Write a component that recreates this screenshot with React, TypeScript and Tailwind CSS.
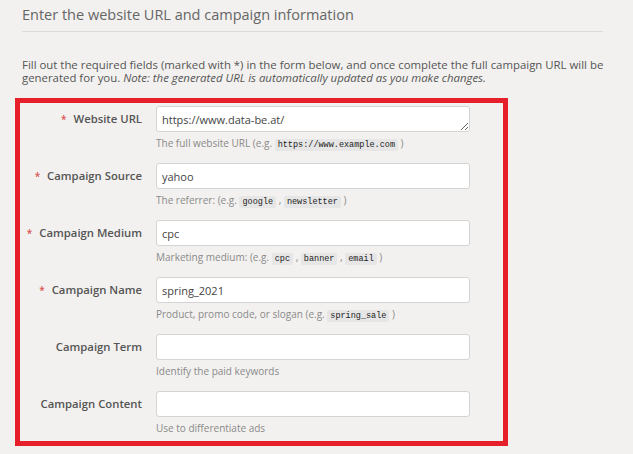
const Code = ({ children }: { children: string }) => (
  <code className="bg-[#e6e6e6] text-[#222] px-[3px] py-[1px] rounded-[2px] text-[8.5px] font-['Liberation_Mono',monospace]">
    {children}
  </code>
)

type Field = {
  label: string
  required?: boolean
  value: string
  help: React.ReactNode
  area?: boolean
}

const fields: Field[] = [
  {
    label: "Website URL",
    required: true,
    value: "https://www.data-be.at/",
    area: true,
    help: (
      <>
        The full website URL (e.g. <Code>https://www.example.com</Code> )
      </>
    ),
  },
  {
    label: "Campaign Source",
    required: true,
    value: "yahoo",
    help: (
      <>
        The referrer: (e.g. <Code>google</Code> , <Code>newsletter</Code> )
      </>
    ),
  },
  {
    label: "Campaign Medium",
    required: true,
    value: "cpc",
    help: (
      <>
        Marketing medium: (e.g. <Code>cpc</Code> , <Code>banner</Code> , <Code>email</Code> )
      </>
    ),
  },
  {
    label: "Campaign Name",
    required: true,
    value: "spring_2021",
    help: (
      <>
        Product, promo code, or slogan (e.g. <Code>spring_sale</Code> )
      </>
    ),
  },
  { label: "Campaign Term", value: "", help: "Identify the paid keywords" },
  { label: "Campaign Content", value: "", help: "Use to differentiate ads" },
]

const App = () => {
  return (
    <div className="min-h-screen bg-[#f2f1ef] font-['Open_Sans',sans-serif] pt-[4px]">
      <div className="pl-[22px] pr-[18px]">
        <h2 className="text-[14.5px] text-[#666] leading-[22px] pb-[5px] mr-[12px] border-b border-[#dcdcdc]">
          Enter the website URL and campaign information
        </h2>
        <p className="text-[11.4px] text-[#555] leading-[13px] mt-[26px]">
          Fill out the required fields (marked with *) in the form below, and once complete the full campaign URL will be
          generated for you. <em>Note: the generated URL is automatically updated as you make changes.</em>
        </p>
      </div>
      <form className="ml-[15px] mt-[14px] w-[493px] border-[5px] border-[#e5202b] pt-[3px] pb-[6px] flex flex-col gap-[13px]">
        {fields.map((f) => (
          <div key={f.label} className="flex">
            <label className="w-[122px] h-[26px] flex items-center justify-end gap-[7px] text-[11.3px] font-semibold text-[#555]">
              {f.required && <span className="text-[#d9534f] text-[10px]">*</span>}
              {f.label}
            </label>
            <div className="ml-[14px] w-[314px] flex flex-col">
              {f.area ? (
                <textarea
                  defaultValue={f.value}
                  className="h-[26px] min-h-[26px] bg-white border border-[#d4d4d4] rounded-[3px] px-[5px] py-[5px] text-[11px] text-[#444] leading-[16px] resize-y overflow-hidden"
                />
              ) : (
                <input
                  type="text"
                  defaultValue={f.value}
                  className="h-[26px] bg-white border border-[#d4d4d4] rounded-[3px] px-[5px] text-[11px] text-[#444]"
                />
              )}
              <div className="mt-[4px] h-[14px] leading-[14px] text-[10px] text-[#8a8a8a] whitespace-nowrap">
                {f.help}
              </div>
            </div>
          </div>
        ))}
      </form>
    </div>
  )
}

export default App
